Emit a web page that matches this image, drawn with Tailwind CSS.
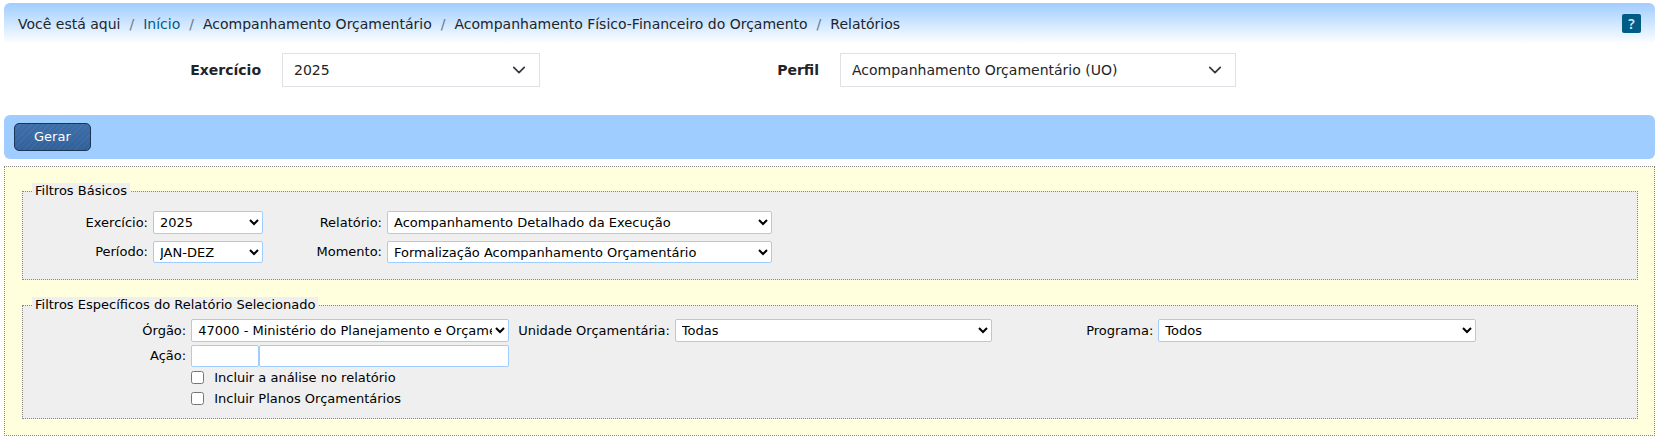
<!DOCTYPE html>
<html lang="pt-BR">
<head>
  <meta charset="UTF-8" />
  <meta name="viewport" content="width=device-width, initial-scale=1.0" />
  <title>Relatórios - Acompanhamento Orçamentário</title>
  <script src="https://cdn.jsdelivr.net/npm/@tailwindcss/browser@4"></script>
</head>
<body class="bg-white pt-[3px] pl-1 pr-[7px] font-['DejaVu_Sans',Verdana,sans-serif] text-[13px] leading-4 text-black">

  <!-- Breadcrumb -->
  <header class="flex h-[41px] items-center justify-between rounded-md bg-linear-to-b from-[#9fcdff] to-white px-3.5 text-sm text-[#212529]">
    <nav aria-label="Localização">
      <ol class="flex">
        <li>Você está aqui</li>
        <li><span class="px-[9px] text-[#6c757d]">/</span><a href="#" class="text-[#005b85]">Início</a></li>
        <li><span class="px-[9px] text-[#6c757d]">/</span>Acompanhamento Orçamentário</li>
        <li><span class="px-[9px] text-[#6c757d]">/</span>Acompanhamento Físico-Financeiro do Orçamento</li>
        <li><span class="px-[9px] text-[#6c757d]">/</span>Relatórios</li>
      </ol>
    </nav>
    <a href="#" title="Ajuda" class="flex size-[19px] items-center justify-center rounded-xs bg-[#005b85] font-['Noto_Sans',sans-serif] text-sm font-semibold text-[#cfe6f5]">?</a>
  </header>

  <!-- Exercício / Perfil -->
  <div class="flex pt-[9px] text-sm text-[#212529]">
    <div class="flex w-[536px] items-center">
      <label for="exercicio" class="w-[257px] text-right font-bold">Exercício</label>
      <div class="relative ml-[21px] grow">
        <select id="exercicio" class="h-[34px] w-full appearance-none border border-[#dee2e6] bg-white px-[11px]">
          <option>2025</option>
        </select>
        <svg class="pointer-events-none absolute right-3.5 top-[10px] size-3.5" viewBox="0 0 16 16" fill="none" stroke="#343a40" stroke-width="2" stroke-linecap="round" stroke-linejoin="round"><path d="m2 5 6 6 6-6" /></svg>
      </div>
    </div>
    <div class="flex w-[696px] items-center">
      <label for="perfil" class="w-[279px] text-right font-bold">Perfil</label>
      <div class="relative ml-[21px] grow">
        <select id="perfil" class="h-[34px] w-full appearance-none border border-[#dee2e6] bg-white px-[11px]">
          <option>Acompanhamento Orçamentário (UO)</option>
        </select>
        <svg class="pointer-events-none absolute right-3.5 top-[10px] size-3.5" viewBox="0 0 16 16" fill="none" stroke="#343a40" stroke-width="2" stroke-linecap="round" stroke-linejoin="round"><path d="m2 5 6 6 6-6" /></svg>
      </div>
    </div>
  </div>

  <!-- Actions -->
  <div class="mt-7 flex h-11 items-center rounded-md bg-[#9fcdff] px-2.5">
    <button type="button" class="h-7 rounded-[5px] border border-[#1b3552] bg-[repeating-linear-gradient(135deg,#ffffff0d_0_1px,transparent_1px_4px),linear-gradient(#3d6fa8,#31619a)] px-[19px] text-white">Gerar</button>
  </div>

  <!-- Filters -->
  <form class="mt-[7px] border border-dotted border-[#888] bg-[#ffffdd] pt-4 pr-4 pb-4 pl-[17px]">
    <fieldset class="border border-dotted border-[#888] bg-[#efefef] pb-4">
      <legend class="ml-[9px] bg-[#efefef] px-[3px]">Filtros Básicos</legend>
      <div class="grid grid-cols-[125px_110px_114px_385px] items-center gap-x-[5px] gap-y-[7px] pt-3">
        <label for="f-exercicio" class="text-right">Exercício:</label>
        <select id="f-exercicio" class="h-[23px] rounded-xs border border-[#9fcdff] bg-white pl-0.5">
          <option>2025</option>
        </select>
        <label for="f-relatorio" class="text-right">Relatório:</label>
        <select id="f-relatorio" class="h-[23px] rounded-xs border border-[#9fcdff] bg-white pl-0.5">
          <option>Acompanhamento Detalhado da Execução</option>
        </select>
        <label for="f-periodo" class="text-right">Período:</label>
        <select id="f-periodo" class="h-[22px] rounded-xs border border-[#9fcdff] bg-white pl-0.5">
          <option>JAN-DEZ</option>
        </select>
        <label for="f-momento" class="text-right">Momento:</label>
        <select id="f-momento" class="h-[22px] rounded-xs border border-[#9fcdff] bg-white pl-0.5">
          <option>Formalização Acompanhamento Orçamentário</option>
        </select>
      </div>
    </fieldset>

    <fieldset class="mt-[17px] border border-dotted border-[#888] bg-[#efefef] pb-3">
      <legend class="ml-[9px] bg-[#efefef] px-[3px]">Filtros Específicos do Relatório Selecionado</legend>
      <div class="grid grid-cols-[10%_20%_10%_20%_10%_20%] items-center gap-y-[3px] pt-1.5 pl-0.5">
        <label for="f-orgao" class="text-right">Órgão:</label>
        <div class="pl-[5px]">
          <select id="f-orgao" class="block h-[23px] w-full rounded-xs border border-[#9fcdff] bg-white pl-0.5">
            <option>47000 - Ministério do Planejamento e Orçamento</option>
          </select>
        </div>
        <label for="f-unidade" class="text-right whitespace-nowrap">Unidade Orçamentária:</label>
        <div class="pl-[5px]">
          <select id="f-unidade" class="block h-[23px] w-full rounded-xs border border-[#9fcdff] bg-white pl-0.5">
            <option>Todas</option>
          </select>
        </div>
        <label for="f-programa" class="text-right">Programa:</label>
        <div class="pl-[5px]">
          <select id="f-programa" class="block h-[23px] w-full rounded-xs border border-[#9fcdff] bg-white pl-0.5">
            <option>Todos</option>
          </select>
        </div>

        <label for="f-acao" class="col-start-1 text-right">Ação:</label>
        <div class="flex pl-[5px]">
          <input id="f-acao" type="text" class="h-[22px] w-[68px] rounded-xs border border-[#9fcdff] bg-white px-1" />
          <input type="text" aria-label="Descrição da ação" class="h-[22px] w-0 grow rounded-xs border border-[#9fcdff] bg-white px-1" />
        </div>

        <div class="col-start-2 flex flex-col gap-1.5 pl-[5px] leading-[15px]">
          <label class="flex items-center gap-2.5"><input type="checkbox" class="size-[13px]" />Incluir a análise no relatório</label>
          <label class="flex items-center gap-2.5"><input type="checkbox" class="size-[13px]" />Incluir Planos Orçamentários</label>
        </div>
      </div>
    </fieldset>
  </form>

</body>
</html>
